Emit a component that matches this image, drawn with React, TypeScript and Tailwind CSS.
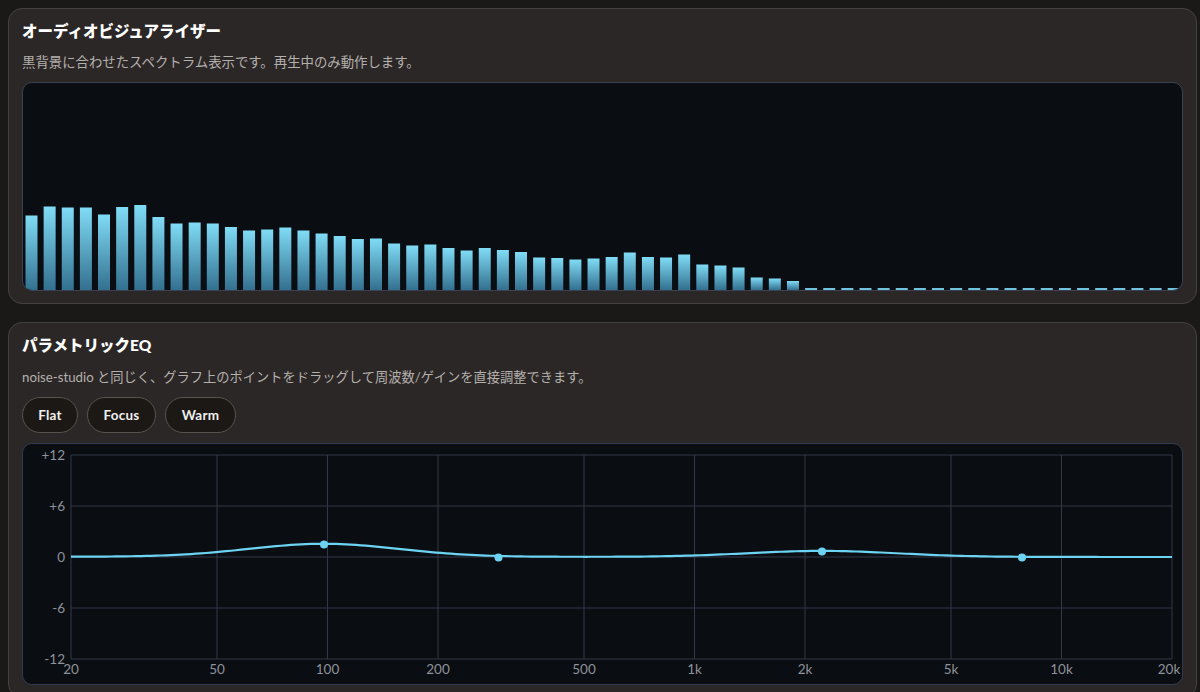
import React from "react";

// bar tops as seen in the spectrum panel, in panel-relative px
const BAR_TOPS = [
  132.5, 123.5, 124.5, 124.5, 131.5, 124, 122, 134, 140.5, 139.5, 140.5, 144, 147.5, 146.5, 144.5, 147.5, 150.5, 153,
  156, 155.5, 160.5, 162.5, 161.5, 165, 167.5, 165, 167, 169, 174.5, 175, 176.5, 175.5, 174, 169.5, 174, 174.5, 171.5,
  181.5, 182.5, 184.5, 194.5, 195.5, 198,
];
const BAR_COUNT = 64;
const SPECTRUM_BOTTOM = 207;
const bars = Array.from({ length: BAR_COUNT }, (_, i) => BAR_TOPS[i] ?? 205);

const Y_LABELS = [
  { label: "+12", y: 11 },
  { label: "+6", y: 62 },
  { label: "0", y: 113 },
  { label: "-6", y: 164 },
  { label: "-12", y: 215 },
];
const X_LABELS = [
  { label: "20", x: 48 },
  { label: "50", x: 194 },
  { label: "100", x: 304.5 },
  { label: "200", x: 415 },
  { label: "500", x: 561 },
  { label: "1k", x: 671.5 },
  { label: "2k", x: 782 },
  { label: "5k", x: 928 },
  { label: "10k", x: 1038.5 },
  { label: "20k", x: 1149 },
];
const POINTS = [
  { x: 301, y: 100.5 },
  { x: 475.5, y: 113.5 },
  { x: 799, y: 107.5 },
  { x: 999, y: 113.5 },
];

// two bells on top of the zero line, same shape as the response curve
const curveY = (x: number) => {
  const a = 13 * Math.exp(-Math.pow((x - 301) / 75, 2) / 2);
  const b = 6 * Math.exp(-Math.pow((x - 799) / 75, 2) / 2);
  return 113 - a - b - 0.3 * (1 - x / 1149);
};
const curvePath = Array.from({ length: 222 }, (_, i) => {
  const x = Math.min(48 + i * 5, 1149);
  return `${i === 0 ? "M" : "L"}${x} ${curveY(x).toFixed(2)}`;
}).join(" ");

const Card: React.FC<{
  title: string;
  description: string;
  descriptionClassName: string;
  children: React.ReactNode;
}> = ({ title, description, descriptionClassName, children }) => (
  <section className="rounded-[14px] border border-[#45413e] bg-[#2c2727] px-[13px] pt-[12px] pb-[12px]">
    <h2 className="text-[15.5px] leading-[20px] font-black text-white">{title}</h2>
    <p className={`leading-[18px] text-[#b4b0ac] ${descriptionClassName}`}>{description}</p>
    {children}
  </section>
);

const PresetButton: React.FC<{ label: string; width: string }> = ({ label, width }) => (
  <button
    className={`h-[36px] ${width} rounded-full border border-[#59534e] bg-[#1b1816] text-[13.5px] font-bold tracking-[0.2px] text-[#f1efed]`}
  >
    {label}
  </button>
);

export default function App() {
  return (
    <div className="h-[692px] w-[1200px] overflow-hidden bg-[#1b1917] pt-2 pr-[3px] pl-2 font-['Lato','Noto_Sans_CJK_JP',sans-serif]">
      <div className="flex flex-col gap-[18px]">
        <Card
          title="オーディオビジュアライザー"
          description="黒背景に合わせたスペクトラム表示です。再生中のみ動作します。"
          descriptionClassName="mt-[12px] text-[13.4px]"
        >
          <div className="mt-[11px] h-[209px] overflow-hidden rounded-[10px] border border-[#3a4252] bg-[#0a0d12]">
            <svg width="1159" height="207" viewBox="0 0 1159 207" className="block">
              <defs>
                <linearGradient id="barFill" x1="0" y1="0" x2="0" y2="1">
                  <stop offset="0" stopColor="#80dcf6" />
                  <stop offset="1" stopColor="#33708f" />
                </linearGradient>
              </defs>
              {bars.map((top, i) => (
                <rect
                  key={i}
                  x={2.5 + i * 18.13}
                  y={top}
                  width={12}
                  height={SPECTRUM_BOTTOM - top}
                  fill={i < 43 ? "url(#barFill)" : "#6fc3df"}
                />
              ))}
            </svg>
          </div>
        </Card>

        <Card
          title="パラメトリックEQ"
          description="noise-studio と同じく、グラフ上のポイントをドラッグして周波数/ゲインを直接調整できます。"
          descriptionClassName="mt-[13px] text-[13.25px]"
        >
          <div className="mt-[11px] flex gap-[9px]">
            <PresetButton label="Flat" width="w-[56px]" />
            <PresetButton label="Focus" width="w-[69px]" />
            <PresetButton label="Warm" width="w-[71px]" />
          </div>
          <div className="mt-[10px] h-[242px] overflow-hidden rounded-[10px] border border-[#323a50] bg-[#0a0d12]">
            <svg width="1159" height="240" viewBox="0 0 1159 240" className="block">
              {Y_LABELS.map((t) => (
                <line key={t.label} x1={48} x2={1149} y1={t.y} y2={t.y} stroke="#323847" strokeWidth={1} />
              ))}
              {X_LABELS.map((t) => (
                <line key={t.label} x1={t.x} x2={t.x} y1={11} y2={215} stroke="#323847" strokeWidth={1} />
              ))}
              {Y_LABELS.map((t) => (
                <text key={t.label} x={42} y={t.y + 5} textAnchor="end" fontSize={13.5} fill="#8e929a">
                  {t.label}
                </text>
              ))}
              {X_LABELS.map((t) => (
                <text
                  key={t.label}
                  x={t.label === "20k" ? 1146 : t.x}
                  y={230}
                  textAnchor="middle"
                  fontSize={13.5}
                  fill="#8e929a"
                >
                  {t.label}
                </text>
              ))}
              <path d={curvePath} fill="none" stroke="#6dd3f2" strokeWidth={2.2} />
              {POINTS.map((p) => (
                <circle key={p.x} cx={p.x} cy={p.y} r={4} fill="#6dd3f2" />
              ))}
            </svg>
          </div>
        </Card>
      </div>
    </div>
  );
}
